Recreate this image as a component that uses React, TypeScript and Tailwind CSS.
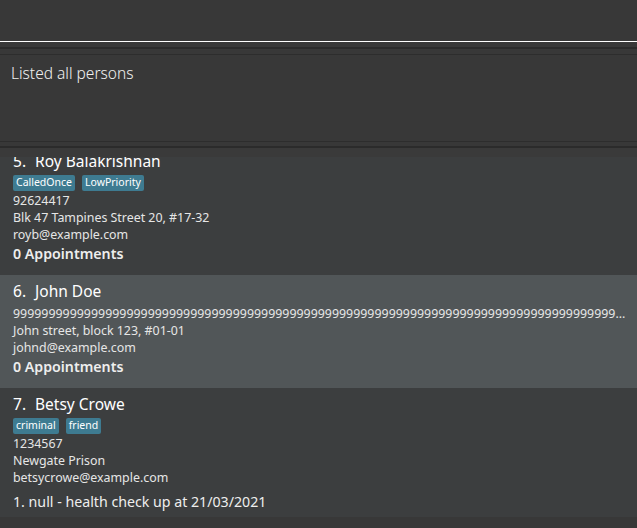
const people = [
  {
    idx: 5,
    name: "Roy Balakrishnan",
    tags: ["CalledOnce", "LowPriority"],
    phone: "92624417",
    address: "Blk 47 Tampines Street 20, #17-32",
    email: "royb@example.com",
    appts: [] as string[],
  },
  {
    idx: 6,
    name: "John Doe",
    tags: [] as string[],
    phone: "9".repeat(160),
    address: "John street, block 123, #01-01",
    email: "johnd@example.com",
    appts: [] as string[],
  },
  {
    idx: 7,
    name: "Betsy Crowe",
    tags: ["criminal", "friend"],
    phone: "1234567",
    address: "Newgate Prison",
    email: "betsycrowe@example.com",
    appts: ["1. null - health check up at 21/03/2021"],
  },
];

function PersonCard({ p, even }: { p: (typeof people)[number]; even: boolean }) {
  return (
    <div className={`flex flex-col pl-[13px] pr-[5px] pt-[7px] ${even ? "bg-[#515658]" : "bg-[#3c3e3f]"} ${p.appts.length ? "pb-[5px]" : "pb-[11px]"}`}>
      <div className="flex h-[20px] items-center gap-[9px] text-[15.5px] text-white">
        <span>{p.idx}.</span>
        <span>{p.name}</span>
      </div>
      {p.tags.length > 0 && (
        <div className="mt-[3px] flex gap-[7px]">
          {p.tags.map((t) => (
            <span key={t} className="flex h-[16px] items-center rounded-[2px] bg-[#3e7b91] px-[3px] text-[10.5px] text-white">
              {t}
            </span>
          ))}
        </div>
      )}
      <div className={`flex flex-col text-[12.4px] leading-[17px] text-[#e6e6e6] ${p.tags.length ? "mt-[1px]" : "mt-[3px]"}`}>
        <span className="truncate">{p.phone}</span>
        <span>{p.address}</span>
        <span>{p.email}</span>
      </div>
      {p.appts.length ? (
        <div className="mt-[6px] flex h-[20px] items-center text-[14.2px] text-[#eeeeee]">
          {p.appts[0]}
        </div>
      ) : (
        <div className="mt-[1px] flex h-[20px] items-center text-[14.2px] font-semibold text-[#eeeeee]">
          0 Appointments
        </div>
      )}
    </div>
  );
}

export default function App() {
  return (
    <div className="flex h-[528px] w-[637px] flex-col overflow-hidden bg-[#383838] font-['Noto_Sans',sans-serif]">
      <div className="h-[41px] shrink-0" />
      <div className="h-[1px] shrink-0 bg-white" />
      <div className="h-[5px] shrink-0" />
      <div className="h-[2px] shrink-0 bg-[#2b2b2b]" />
      <div className="h-[5px] shrink-0" />
      <div className="h-[1px] shrink-0 bg-[#2d2d2d]" />
      <div className="h-[86px] shrink-0 px-[11px] pt-[7px] text-[15.5px] font-light text-[#f0f0f0]">
        Listed all persons
      </div>
      <div className="h-[1px] shrink-0 bg-[#2d2d2d]" />
      <div className="h-[4px] shrink-0" />
      <div className="h-[2px] shrink-0 bg-[#2b2b2b]" />
      <div className="h-[9px] shrink-0 bg-[#3a3a3a]" />
      <div className="flex-1 overflow-hidden">
        <div className="-mt-[12px] flex flex-col">
          {people.map((p, i) => (
            <PersonCard key={p.idx} p={p} even={i % 2 === 1} />
          ))}
        </div>
      </div>
    </div>
  );
}
